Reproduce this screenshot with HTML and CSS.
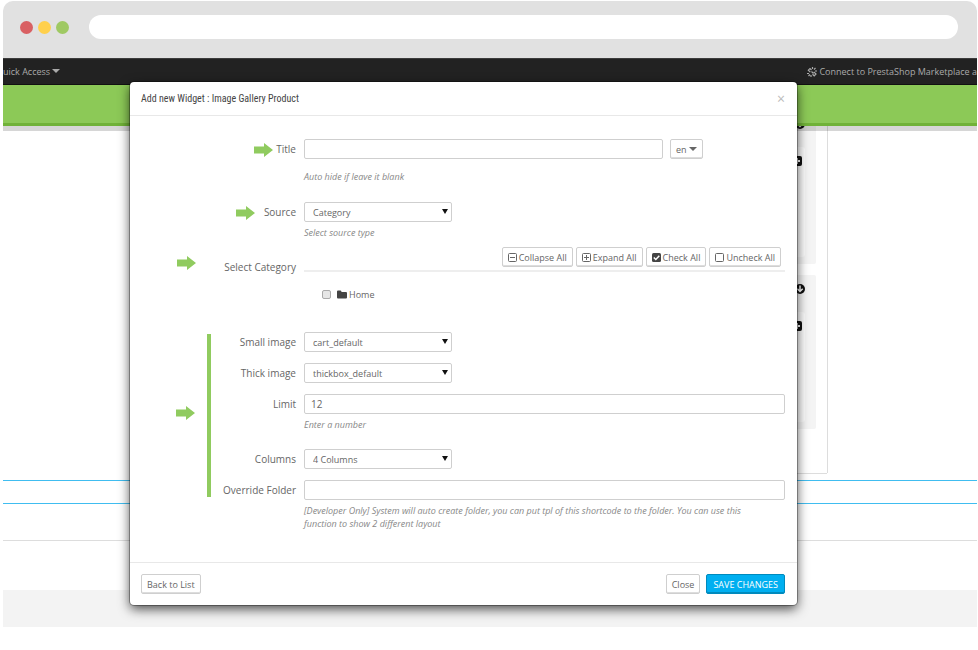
FILE: index.html
```
<!DOCTYPE html>
<html lang="en">
<head>
  <meta charset="UTF-8">
  <meta name="viewport" content="width=device-width, initial-scale=1.0">
  <title>Add new Widget</title>
  <link rel="stylesheet" href="styles.css">
</head>
<body>

  <svg width="0" height="0" class="sprite" aria-hidden="true">
    <symbol id="arrow" viewBox="0 0 19 14"><path d="M0 3.5h10V0l9 7-9 7v-3.500H0z" fill="#90cb5f"/></symbol>
    <symbol id="plus-box" viewBox="0 0 10 10"><rect width="10" height="10" rx="2" fill="#111"/><path d="M5 2v6M2 5h6" stroke="#fff" stroke-width="2"/></symbol>
    <symbol id="circle-down" viewBox="0 0 10 10"><circle cx="5" cy="5" r="5" fill="#111"/><path d="M5 1.500v6M2.300 4.800L5 7.500l2.700-2.700" stroke="#fff" stroke-width="1.500" fill="none"/></symbol>
  </svg>

  <div class="browser">
    <div class="chrome">
      <span class="dot red"></span>
      <span class="dot yellow"></span>
      <span class="dot green"></span>
      <div class="address"></div>
    </div>

    <div class="screen">
      <nav class="topbar">
        <a href="#" class="quick">uick Access <span class="caret"></span></a>
        <a href="#" class="connect">
          <svg width="10" height="10" viewBox="0 0 10 10" fill="none" stroke="#aaa" stroke-width="1.2"><path d="M4.500 3L3 1.500 1.300 3.200 3.300 5.200M5.500 7.200L7.200 8.800 9 7 6.800 4.800M4.500 4.500l2 2M5.500 0v2M8.500 1L7 2.500M10 4H8M0 6.500h2M3 7.500L1.500 9M4 8v2"/></svg>
          <span>Connect to PrestaShop Marketplace a</span>
        </a>
      </nav>
      <div class="greenbar"></div>

      <main class="page">
        <div class="panel">
          <div class="hook">
            <svg class="hook-down" width="10" height="10"><use href="#circle-down"/></svg>
            <div class="hook-body"><svg width="10" height="10"><use href="#plus-box"/></svg></div>
          </div>
          <div class="hook">
            <svg class="hook-down" width="10" height="10"><use href="#circle-down"/></svg>
            <div class="hook-body"><svg width="10" height="10"><use href="#plus-box"/></svg></div>
          </div>
        </div>
        <div class="blue-row"></div>
        <div class="line-row"></div>
        <div class="page-footer"></div>
      </main>

      <div class="overlay">
        <div class="modal" role="dialog">
          <div class="modal-header">
            <h4>Add new Widget : Image Gallery Product</h4>
            <button type="button" class="close" aria-label="Dismiss">×</button>
          </div>

          <form class="modal-body">
            <div class="row title-row">
              <svg class="pointer at-title" width="19" height="14"><use href="#arrow"/></svg>
              <label for="title">Title</label>
              <div class="field">
                <div class="with-lang">
                  <input type="text" id="title">
                  <button type="button" class="btn">en <span class="caret"></span></button>
                </div>
                <p class="help">Auto hide if leave it blank</p>
              </div>
            </div>

            <div class="row source-row">
              <svg class="pointer at-source" width="19" height="14"><use href="#arrow"/></svg>
              <label for="source">Source</label>
              <div class="field">
                <div class="select"><select id="source"><option>Category</option></select></div>
                <p class="help">Select source type</p>
              </div>
            </div>

            <div class="row category-row">
              <svg class="pointer at-category" width="19" height="14"><use href="#arrow"/></svg>
              <span class="label">Select Category</span>
              <div class="field">
                <div class="tree-tools">
                  <button type="button" class="btn"><svg width="9" height="9" viewBox="0 0 9 9" fill="none" stroke="#666"><rect x=".5" y=".5" width="8" height="8" rx="1"/><path d="M2 4.500h5"/></svg>Collapse All</button>
                  <button type="button" class="btn"><svg width="9" height="9" viewBox="0 0 9 9" fill="none" stroke="#666"><rect x=".5" y=".5" width="8" height="8" rx="1"/><path d="M2 4.500h5M4.500 2v5"/></svg>Expand All</button>
                  <button type="button" class="btn"><svg width="9" height="9" viewBox="0 0 9 9" fill="none"><rect width="9" height="9" rx="1.500" fill="#444"/><path d="M1.800 4.500l2 2 3.500-3.800" stroke="#fff" stroke-width="1.500"/></svg>Check All</button>
                  <button type="button" class="btn"><svg width="9" height="9" viewBox="0 0 9 9" fill="none" stroke="#666"><rect x=".5" y=".5" width="8" height="8" rx="1"/></svg>Uncheck All</button>
                </div>
                <div class="tree">
                  <input type="checkbox" id="home">
                  <label for="home"><svg width="10" height="9" viewBox="0 0 10 9"><path d="M0 1.500Q0 .5 1 .5h2.500Q4.500.5 4.500 2H9q1 0 1 1v4.500q0 1-1 1H1q-1 0-1-1z" fill="#444"/></svg>Home</label>
                </div>
              </div>
            </div>

            <div class="group">
              <svg class="pointer at-group" width="19" height="14"><use href="#arrow"/></svg>
              <div class="row">
                <label for="small">Small image</label>
                <div class="select"><select id="small"><option>cart_default</option></select></div>
              </div>
              <div class="row">
                <label for="thick">Thick image</label>
                <div class="select"><select id="thick"><option>thickbox_default</option></select></div>
              </div>
              <div class="row limit-row">
                <label for="limit">Limit</label>
                <div class="field">
                  <input type="text" id="limit" value="12">
                  <p class="help">Enter a number</p>
                </div>
              </div>
              <div class="row">
                <label for="columns">Columns</label>
                <div class="select"><select id="columns"><option>4 Columns</option></select></div>
              </div>
              <div class="row">
                <label for="folder">Override Folder</label>
                <div class="field">
                  <input type="text" id="folder">
                  <p class="help">[Developer Only] System will auto create folder, you can put tpl of this shortcode to the folder. You can use this function to show 2 different layout</p>
                </div>
              </div>
            </div>
          </form>

          <div class="modal-footer">
            <button type="button" class="btn back">Back to List</button>
            <button type="button" class="btn">Close</button>
            <button type="button" class="btn primary">SAVE CHANGES</button>
          </div>
        </div>
      </div>
    </div>
  </div>

</body>
</html>
```
FILE: styles.css
```
:root {
  --green: #8cc957;
  --arrow-green: #90cb5f;
  --blue: #00aff0;
  --border: #cfcfcf;
  --text: #666;
}

* {
  box-sizing: border-box;
  margin: 0;
  padding: 0;
}

body {
  font-family: 'Open Sans', sans-serif;
  font-size: 9px;
  line-height: 13px;
  color: var(--text);
  background: #fff;
}

a {
  color: inherit;
  text-decoration: none;
}

input,
select,
button {
  font: inherit;
  color: inherit;
}

.sprite {
  position: absolute;
}

.browser {
  padding: 1px 1px 0 3px;
}

/* window frame */
.chrome {
  display: flex;
  align-items: center;
  gap: 5px;
  height: 57px;
  padding: 0 19px 5px 17px;
  background: #e1e1e1;
  border-radius: 10px 10px 0 0;
}

.dot {
  width: 13px;
  height: 13px;
  border-radius: 50%;
}

.red { background: #d96063; }
.yellow { background: #ffd04c; }
.green { background: #9fc963; }

.address {
  flex: 1;
  height: 24px;
  margin-left: 15px;
  border-radius: 12px;
  background: #fff;
}

.screen {
  position: relative;
  overflow: hidden;
}

.topbar {
  display: flex;
  justify-content: space-between;
  align-items: center;
  height: 27px;
  background: #222;
  border-top: 1px solid #3c3c3c;
  border-bottom: 1px solid #111;
  color: #aaa;
  white-space: nowrap;
}

.connect {
  display: flex;
  align-items: center;
  gap: 2px;
}

.caret {
  display: inline-block;
  border: 4px solid transparent;
  border-top: 4px solid currentColor;
  border-bottom: 0;
  vertical-align: 2px;
}

.greenbar {
  position: relative;
  z-index: 1;
  height: 41px;
  background: var(--green);
  border-bottom: 3px solid #70b238;
  box-shadow: 0 5px 0 rgba(0, 0, 0, 0.16);
}

/* page behind the dialog */
.page {
  margin-top: -16px;
}

.panel {
  width: 825px;
  height: 363px;
  padding: 0 11px 0 200px;
  border-right: 1px solid #ddd;
}

.hook {
  height: 154px;
  margin-bottom: 11px;
  padding: 9px 11px 7px;
  background: #f4f4f4;
  border-radius: 2px;
  text-align: right;
}

.hook-down {
  display: block;
  margin-left: auto;
}

.hook-body {
  height: 110px;
  margin-top: 18px;
  padding: 9px 3px;
  background: #fcfcfc;
  border-radius: 3px;
}

/* bottom edge of the panel, starts right of the menu column */
.panel::after {
  content: '';
  display: block;
  height: 33px;
  margin-right: -11px;
  border-bottom: 1px solid #ddd;
}

.blue-row {
  height: 24px;
  margin-top: 7px;
  border-top: 1px solid #40bdf0;
  border-bottom: 1px solid #40bdf0;
}

.line-row {
  height: 37px;
  border-bottom: 1px solid #ddd;
}

.page-footer {
  height: 37px;
  margin-top: 49px;
  background: #f3f3f3;
}

/* dialog */
.overlay {
  position: absolute;
  inset: 0;
  z-index: 2;
  padding: 24px 180px 0 127px;
}

.modal {
  background: #fff;
  border-radius: 4px;
  box-shadow: 0 0 0 1px rgba(0, 0, 0, 0.3), 0 4px 12px rgba(0, 0, 0, 0.7);
}

.modal-header {
  display: flex;
  justify-content: space-between;
  align-items: center;
  height: 34px;
  padding: 0 12px 0 11px;
  border-bottom: 1px solid #e8e8e8;
}

.modal-header h4 {
  font-family: 'Ubuntu Condensed', 'Roboto Condensed', Roboto, sans-serif;
  font-size: 10px;
  font-weight: 400;
  color: #444;
}

.close {
  border: 0;
  background: none;
  font-size: 14px;
  color: #bbb;
}

.modal-body {
  padding: 23px 12px 21px 11px;
}

.row {
  position: relative;
  display: grid;
  grid-template-columns: 155px 1fr;
  column-gap: 8px;
  margin-bottom: 11px;
}

.row > label,
.row > .label {
  font-size: 10px;
  line-height: 20px;
  text-align: right;
}

input[type="text"],
.select select {
  display: block;
  width: 100%;
  height: 20px;
  padding: 0 6px;
  border: 1px solid var(--border);
  border-radius: 2px;
  background: #fff;
}

input[type="text"] {
  font-size: 10px;
}

.select {
  position: relative;
  width: 148px;
}

.select select {
  appearance: none;
  padding: 0 8px;
}

.select::after {
  content: '';
  position: absolute;
  right: 4px;
  top: 7px;
  border: 3px solid transparent;
  border-top: 5px solid #111;
  border-bottom: 0;
  pointer-events: none;
}

.help {
  max-width: 465px;
  margin-top: 4px;
  font-style: italic;
  color: #888;
}

.with-lang {
  display: flex;
  gap: 7px;
}

.with-lang input {
  flex: 0 1 359px;
}

.title-row {
  margin-bottom: 19px;
}

.title-row .help {
  margin-top: 11px;
}

.source-row {
  margin-bottom: 8px;
}

.category-row {
  margin-bottom: 31px;
}

.category-row .label {
  padding-top: 10px;
}

.tree-tools {
  display: flex;
  justify-content: flex-end;
  gap: 3px;
  padding: 0 4px 3px 0;
  border-bottom: 2px solid #eee;
}

.tree {
  display: flex;
  align-items: center;
  gap: 6px;
  padding: 16px 18px 0;
}

.tree input {
  appearance: none;
  width: 9px;
  height: 9px;
  border: 1px solid #aaa;
  border-radius: 2px;
  background: #e6e6e6;
}

.tree label {
  display: flex;
  align-items: center;
  gap: 2px;
}

.limit-row {
  margin-bottom: 18px;
}

.group {
  position: relative;
}

.group::before {
  content: '';
  position: absolute;
  left: 66px;
  top: 2px;
  width: 4px;
  height: 163px;
  background: var(--arrow-green);
}

/* green pointers lie over the form */
.pointer {
  position: absolute;
  top: 4px;
}

.at-title { left: 113px; }
.at-source { left: 95px; }
.at-category { left: 36px; top: 9px; }
.at-group { left: 35px; top: 74px; }

.btn {
  display: inline-flex;
  align-items: center;
  gap: 2px;
  height: 20px;
  padding: 0 5px;
  border: 1px solid var(--border);
  border-radius: 2px;
  background: #fff;
  box-shadow: inset 0 -1px 0 #ddd;
  white-space: nowrap;
}

.modal-footer {
  display: flex;
  gap: 6px;
  padding: 11px 12px 11px 11px;
  border-top: 1px solid #e8e8e8;
}

.back {
  margin-right: auto;
}

.primary {
  padding: 0 6px;
  background: var(--blue);
  border-color: #008abd;
  box-shadow: inset 0 -1px 0 #008abd;
  color: #fff;
}
```
